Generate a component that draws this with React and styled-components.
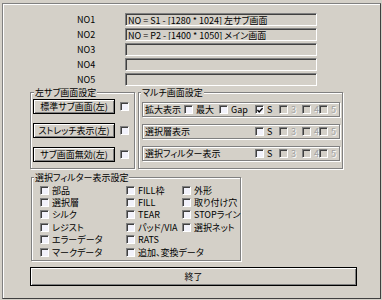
import React from "react";
import styled, { createGlobalStyle } from "styled-components";

const GlobalStyle = createGlobalStyle`
  html, body {
    margin: 0;
    padding: 0;
    background: #d4d0c8;
  }
`;

const fields = [
  { label: "NO1", value: "NO = S1 - [1280 * 1024] 左サブ画面" },
  { label: "NO2", value: "NO = P2 - [1400 * 1050] メイン画面" },
  { label: "NO3", value: "" },
  { label: "NO4", value: "" },
  { label: "NO5", value: "" },
];

const subButtons = ["標準サブ画面(左)", "ストレッチ表示(左)", "サブ画面無効(左)"];

const filterItems = [
  "部品",
  "選択層",
  "シルク",
  "レジスト",
  "エラーデータ",
  "マークデータ",
  "FILL枠",
  "FILL",
  "TEAR",
  "パッド/VIA",
  "RATS",
  "追加、変換データ",
  "外形",
  "取り付け穴",
  "STOPライン",
  "選択ネット",
];

const Check = ({ checked, disabled }) => (
  <CheckBox $disabled={disabled}>
    {checked && (
      <svg width="7" height="7" viewBox="0 0 7 7">
        <path d="M0.5 3 L2.5 5.2 L6.5 0.8" fill="none" stroke="#000" strokeWidth="1.6" />
      </svg>
    )}
  </CheckBox>
);

const Option = ({ label, checked, disabled }) => (
  <OptionItem>
    <Check checked={checked} disabled={disabled} />
    <OptionText $disabled={disabled}>{label}</OptionText>
  </OptionItem>
);

const ScreenOptions = () => (
  <>
    <Option label="S" />
    <Option label="3" disabled />
    <Option label="4" disabled />
    <Option label="5" disabled />
  </>
);

const App = () => {
  return (
    <>
      <GlobalStyle />
      <Window>
        <Frame>
          <FieldList>
            {fields.map((f) => (
              <React.Fragment key={f.label}>
                <FieldLabel>{f.label}</FieldLabel>
                <Field>{f.value}</Field>
              </React.Fragment>
            ))}
          </FieldList>

          <MidRow>
            <GroupBox $w={105} $h={77}>
              <GroupTitle $indent={3}>左サブ画面設定</GroupTitle>
              <SubList>
                {subButtons.map((b) => (
                  <SubRow key={b}>
                    <SubButton>{b}</SubButton>
                    <Check />
                  </SubRow>
                ))}
              </SubList>
            </GroupBox>

            <GroupBox $w={205} $h={77}>
              <GroupTitle $indent={2}>マルチ画面設定</GroupTitle>
              <MultiList>
                <MultiRow>
                  <RowLabel>拡大表示</RowLabel>
                  <Option label="最大" />
                  <Option label="Gap" />
                  <Option label="S" checked />
                  <Option label="3" disabled />
                  <Option label="4" disabled />
                  <Option label="5" disabled />
                </MultiRow>
                <MultiRow>
                  <RowLabel $span>選択層表示</RowLabel>
                  <ScreenOptions />
                </MultiRow>
                <MultiRow>
                  <RowLabel $span>選択フィルター表示</RowLabel>
                  <ScreenOptions />
                </MultiRow>
              </MultiList>
            </GroupBox>
          </MidRow>

          <FilterBox $w={210} $h={84}>
            <GroupTitle $indent={2}>選択フィルター表示設定</GroupTitle>
            <FilterGrid>
              {filterItems.map((item) => (
                <Option key={item} label={item} />
              ))}
            </FilterGrid>
          </FilterBox>

          <CloseButton>終了</CloseButton>
        </Frame>
      </Window>
    </>
  );
};

export default App;

const Window = styled.div`
  width: 382px;
  height: 300px;
  box-sizing: border-box;
  padding: 3px 1px 1px 2px;
  background: #d4d0c8;
`;

const Frame = styled.div`
  height: 100%;
  box-sizing: border-box;
  border-top: 1px solid #808080;
  border-left: 1px solid #808080;
  border-right: 1px solid #404040;
  border-bottom: 1px solid #404040;
  box-shadow: inset 1px 1px 0 #fff;
  padding: 9px 0 0 27px;
  display: flex;
  flex-direction: column;
  align-items: flex-start;
  font-family: "Noto Sans CJK JP", "Liberation Sans", sans-serif;
  font-size: 9px;
  line-height: 11px;
  color: #000;
  font-feature-settings: "palt";
`;

const FieldList = styled.div`
  display: grid;
  grid-template-columns: 48px 192px;
  row-gap: 2px;
  align-items: center;
  margin-left: 47px;
`;

const FieldLabel = styled.span`
  white-space: nowrap;
`;

const Field = styled.div`
  height: 13px;
  box-sizing: border-box;
  border-top: 1px solid #808080;
  border-left: 1px solid #808080;
  border-bottom: 1px solid #fff;
  border-right: 1px solid #fff;
  box-shadow: inset 1px 1px 0 #404040;
  padding: 1px 0 0 2px;
  line-height: 11px;
  white-space: nowrap;
  overflow: hidden;
`;

const MidRow = styled.div`
  display: flex;
  gap: 3px;
  margin-top: 6px;
`;

const GroupBox = styled.div`
  width: ${(p) => p.$w}px;
  height: ${(p) => p.$h}px;
  box-sizing: border-box;
  border: 1px solid #808080;
  box-shadow: inset 1px 1px 0 #fff, 1px 1px 0 #fff;
  display: flex;
  flex-direction: column;
  align-items: flex-start;
`;

const FilterBox = styled(GroupBox)`
  margin: 8px 0 0 1px;
`;

const GroupTitle = styled.span`
  height: 11px;
  margin: -6px 0 0 ${(p) => p.$indent}px;
  padding: 0 1px;
  background: #d4d0c8;
  white-space: nowrap;
`;

const SubList = styled.div`
  display: flex;
  flex-direction: column;
  gap: 9px;
  margin: 1px 0 0 2px;
`;

const SubRow = styled.div`
  display: flex;
  align-items: center;
  gap: 5px;
`;

const SubButton = styled.div`
  width: 82px;
  height: 15px;
  box-sizing: border-box;
  border: 1px solid #000;
  box-shadow: inset 1px 1px 0 #fff, inset -1px -1px 0 #808080;
  display: flex;
  align-items: center;
  justify-content: center;
  white-space: nowrap;
`;

const CloseButton = styled(SubButton)`
  width: 327px;
  height: 19px;
  margin-top: 6px;
`;

const MultiList = styled.div`
  display: flex;
  flex-direction: column;
  gap: 7px;
  margin: 4px 0 0 3px;
`;

const MultiRow = styled.div`
  width: 198px;
  height: 15px;
  box-sizing: border-box;
  border: 1px solid #808080;
  box-shadow: inset 1px 1px 0 #fff, 1px 1px 0 #fff;
  display: grid;
  grid-template-columns: 40px 35px 36px 24px 23px 17px 1fr;
  align-items: center;
  padding-left: 1px;
`;

const RowLabel = styled.span`
  padding-left: 1px;
  white-space: nowrap;
  grid-column: ${(p) => (p.$span ? "1 / 4" : "auto")};
`;

const FilterGrid = styled.div`
  display: grid;
  grid-auto-flow: column;
  grid-template-rows: repeat(6, 12.4px);
  grid-template-columns: 86px 56px auto;
  align-items: center;
  margin: 1px 0 0 8px;
`;

const OptionItem = styled.div`
  display: flex;
  align-items: center;
  gap: 3px;
  white-space: nowrap;
`;

const OptionText = styled.span`
  color: ${(p) => (p.$disabled ? "#a0a0a0" : "#000")};
  text-shadow: ${(p) => (p.$disabled ? "1px 1px 0 #fff" : "none")};
`;

const CheckBox = styled.span`
  width: 9px;
  height: 9px;
  flex: none;
  box-sizing: border-box;
  border-top: 1px solid #808080;
  border-left: 1px solid #808080;
  border-bottom: 1px solid #fff;
  border-right: 1px solid #fff;
  box-shadow: inset 1px 1px 0 #404040;
  background: ${(p) => (p.$disabled ? "#d4d0c8" : "#f2f2fb")};
  display: flex;
  align-items: center;
  justify-content: center;
  padding: 1px 0 0 1px;
`;
